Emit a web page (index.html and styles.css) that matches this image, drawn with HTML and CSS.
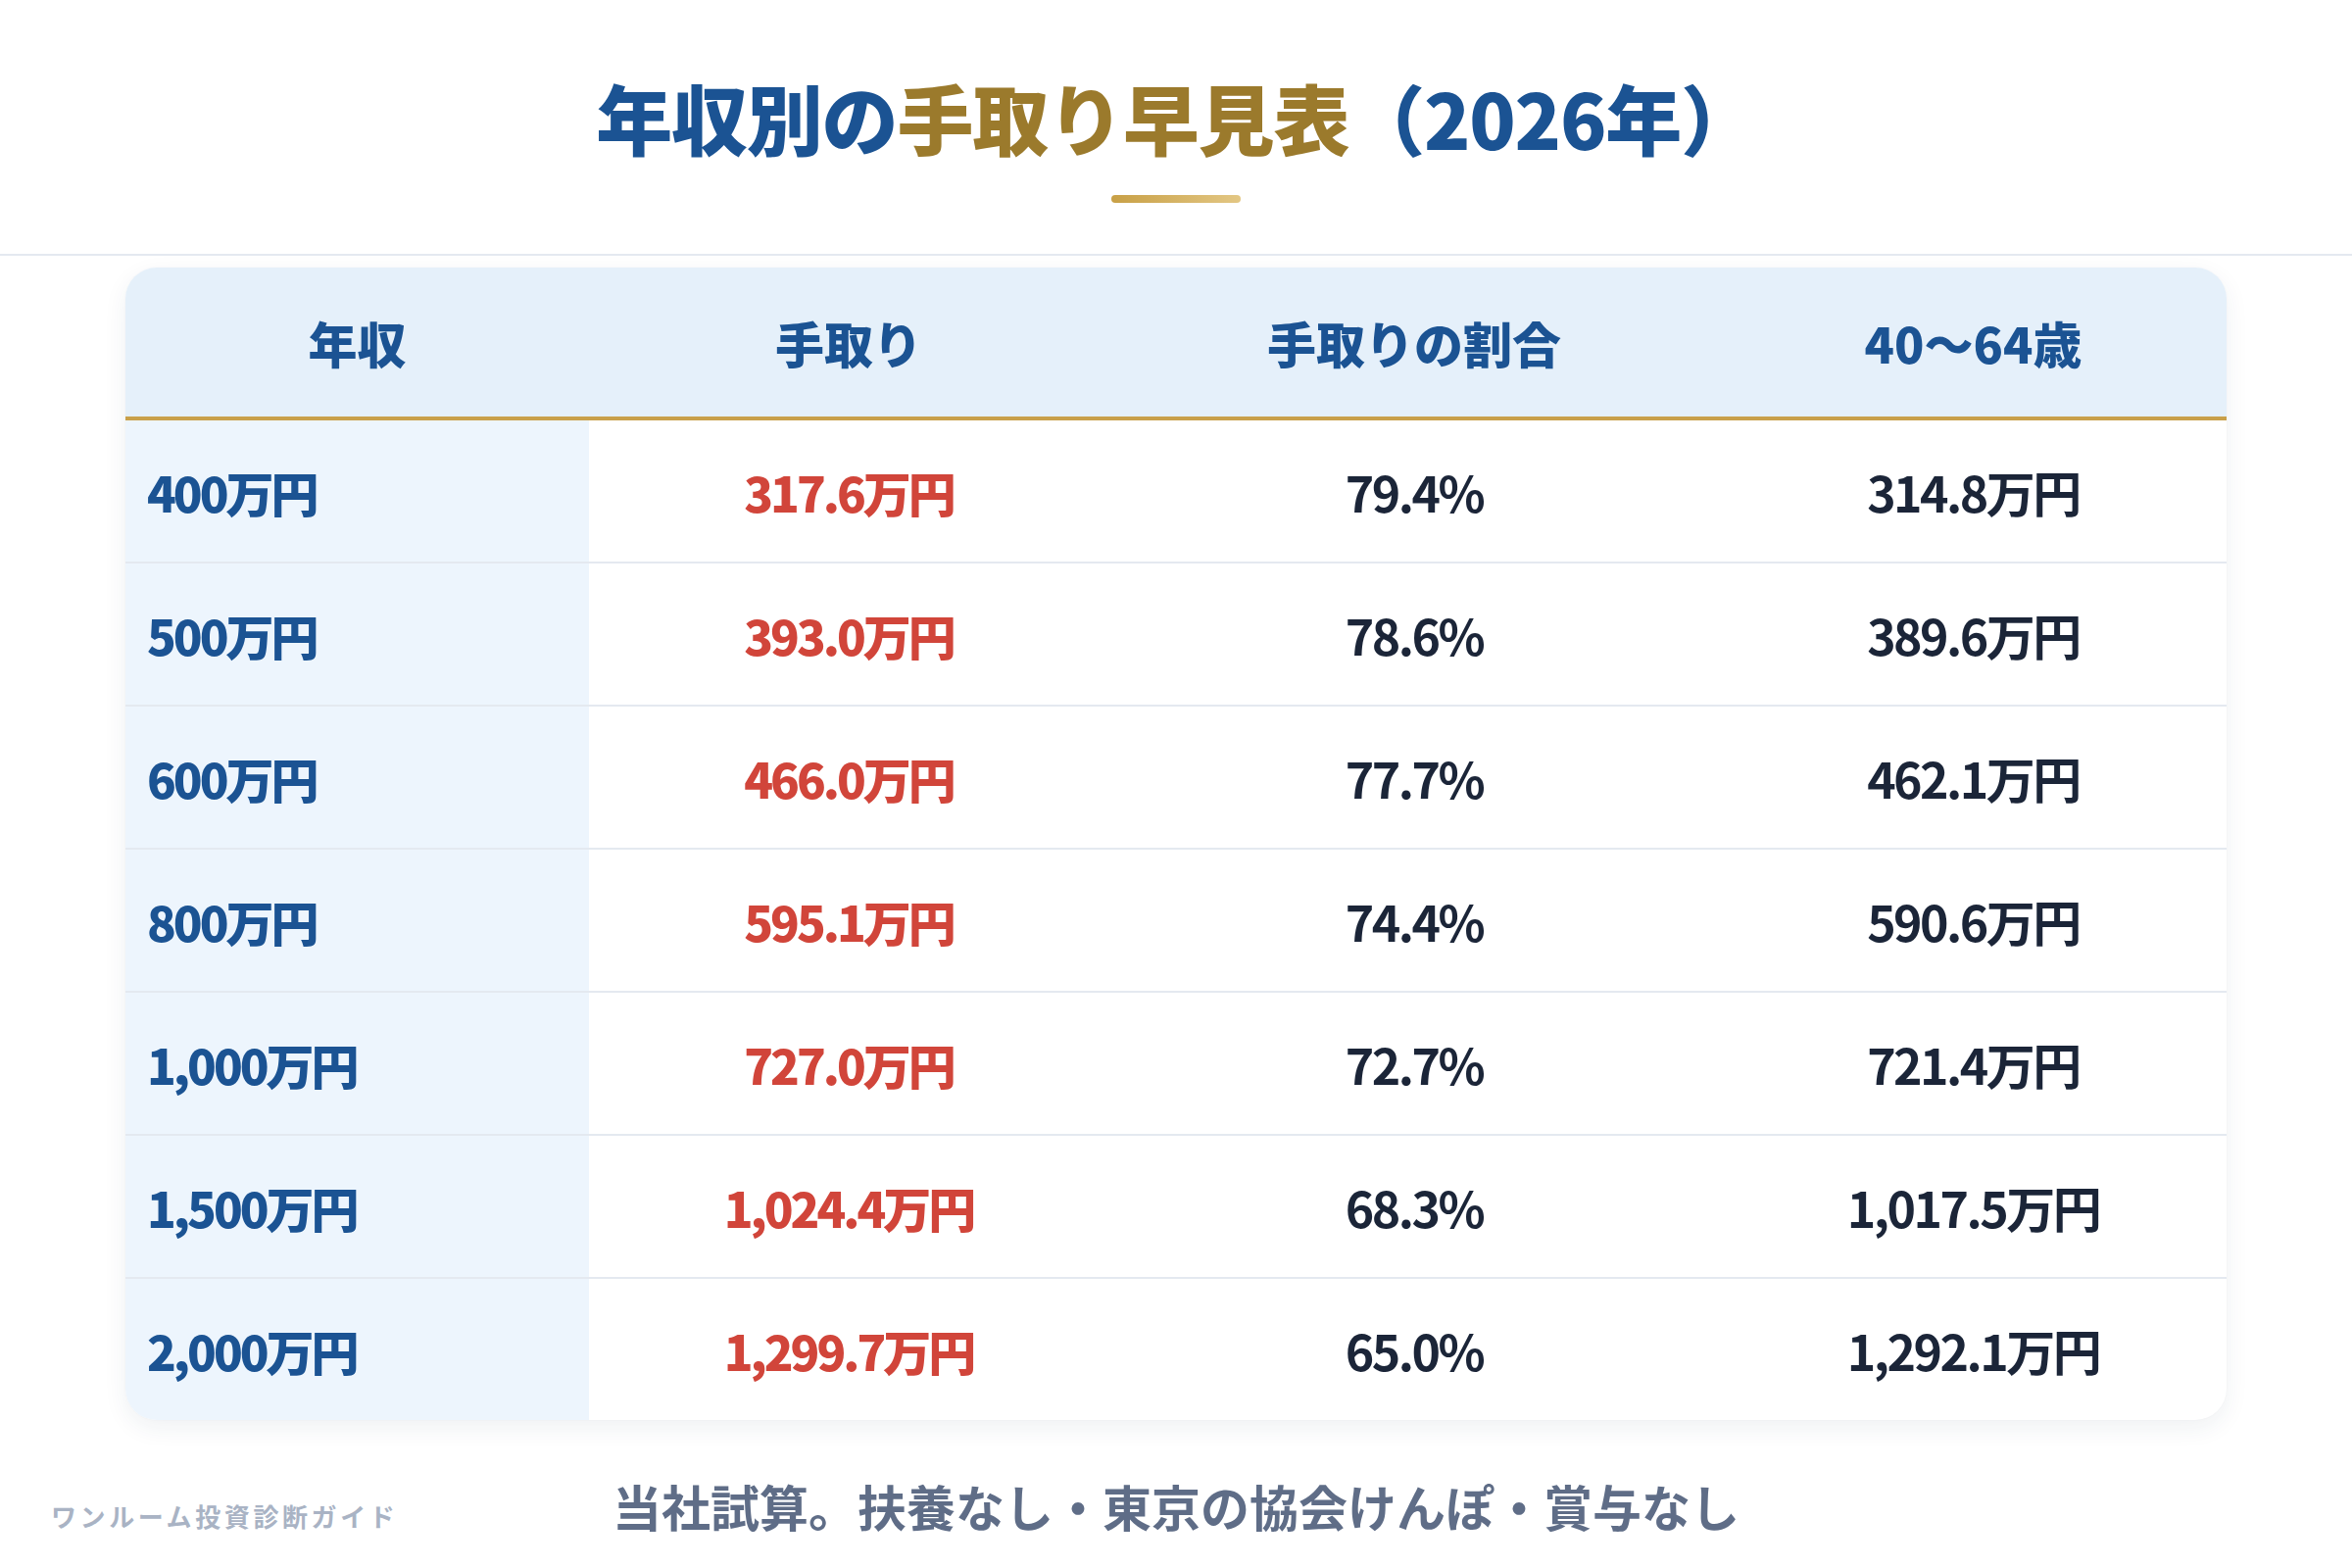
FILE: index.html
```html
<!DOCTYPE html>
<html lang="ja">
<head>
<meta charset="utf-8">
<title>年収別の手取り早見表（2026年）</title>
<link rel="stylesheet" href="styles.css">
</head>
<body>
<header class="page-head">
  <h1 class="title"><span class="blue">年収別の</span><span class="gold">手取り早見表</span><span class="blue">（2026年）</span></h1>
  <div class="title-bar"></div>
</header>

<main class="table-wrap">
  <div class="table">
    <div class="row head">
      <div class="cell">年収</div>
      <div class="cell">手取り</div>
      <div class="cell">手取りの割合</div>
      <div class="cell">40〜64歳</div>
    </div>
    <div class="row">
      <div class="cell income">400万円</div>
      <div class="cell net">317.6万円</div>
      <div class="cell plain">79.4%</div>
      <div class="cell plain">314.8万円</div>
    </div>
    <div class="row">
      <div class="cell income">500万円</div>
      <div class="cell net">393.0万円</div>
      <div class="cell plain">78.6%</div>
      <div class="cell plain">389.6万円</div>
    </div>
    <div class="row">
      <div class="cell income">600万円</div>
      <div class="cell net">466.0万円</div>
      <div class="cell plain">77.7%</div>
      <div class="cell plain">462.1万円</div>
    </div>
    <div class="row">
      <div class="cell income">800万円</div>
      <div class="cell net">595.1万円</div>
      <div class="cell plain">74.4%</div>
      <div class="cell plain">590.6万円</div>
    </div>
    <div class="row">
      <div class="cell income">1,000万円</div>
      <div class="cell net">727.0万円</div>
      <div class="cell plain">72.7%</div>
      <div class="cell plain">721.4万円</div>
    </div>
    <div class="row">
      <div class="cell income">1,500万円</div>
      <div class="cell net">1,024.4万円</div>
      <div class="cell plain">68.3%</div>
      <div class="cell plain">1,017.5万円</div>
    </div>
    <div class="row last">
      <div class="cell income">2,000万円</div>
      <div class="cell net">1,299.7万円</div>
      <div class="cell plain">65.0%</div>
      <div class="cell plain">1,292.1万円</div>
    </div>
  </div>
</main>

<footer class="foot">
  <div class="brand">ワンルーム投資診断ガイド</div>
  <div class="note">当社試算。扶養なし・東京の協会けんぽ・賞与なし</div>
  <div></div>
</footer>
</body>
</html>
```

FILE: styles.css
```css
html, body {
  margin: 0;
  padding: 0;
  background: #ffffff;
}

body {
  width: 2400px;
  height: 1600px;
  font-family: "Noto Sans CJK JP", "Noto Sans", sans-serif;
  overflow: hidden;
}

.page-head {
  display: flex;
  flex-direction: column;
  align-items: center;
  padding-top: 80px;
  padding-bottom: 52px;
  border-bottom: 2px solid #e4e9f0;
}

.title {
  margin: 0;
  font-size: 78px;
  line-height: 1;
  font-weight: 900;
  letter-spacing: -1.2px;
  white-space: nowrap;
}

.blue { color: #1b5393; }
.gold { color: #9b7a2c; }

.title-bar {
  margin-top: 41px;
  width: 132px;
  height: 8px;
  border-radius: 4px;
  background: linear-gradient(90deg, #c8a046 0%, #e3c784 100%);
}

.table-wrap {
  display: flex;
  justify-content: center;
  margin-top: 12px;
}

.table {
  width: 2144px;
  border-radius: 32px;
  overflow: hidden;
  background: #ffffff;
  box-shadow: 0 8px 24px rgba(30, 50, 80, 0.07), 0 0 2px rgba(30, 50, 80, 0.04);
}

.row {
  display: grid;
  grid-template-columns: 473px 530px 624px 517px;
  height: 146px;
  border-bottom: 2px solid #e4e9f0;
  box-sizing: border-box;
}

.row.last {
  border-bottom: none;
  height: 144px;
}

.row.head {
  height: 156px;
  background: #e5f0fa;
  border-bottom: 4px solid #c9a04a;
}

.cell {
  display: flex;
  align-items: center;
  justify-content: center;
  font-size: 50px;
  font-weight: 700;
  line-height: 1;
  letter-spacing: -2.5px;
  white-space: nowrap;
}

.head .cell {
  color: #1b5393;
  font-weight: 900;
  letter-spacing: 0;
}

.cell.income {
  justify-content: flex-start;
  padding-left: 22px;
  background: #edf5fd;
  color: #1b5393;
  font-size: 49px;
  font-weight: 900;
  letter-spacing: -3px;
}

.cell.net {
  color: #d1453a;
  font-size: 49px;
  font-weight: 900;
  letter-spacing: -3px;
}

.cell.plain {
  color: #1b2538;
}

.foot {
  display: grid;
  grid-template-columns: 1fr auto 1fr;
  align-items: baseline;
  padding: 0 52px;
  margin-top: 57px;
}

.brand {
  font-size: 26px;
  font-weight: 700;
  letter-spacing: 3.6px;
  color: #a9b3c4;
  white-space: nowrap;
}

.note {
  font-size: 50px;
  font-weight: 700;
  line-height: 1.2;
  color: #5f6d87;
  white-space: nowrap;
}
```
